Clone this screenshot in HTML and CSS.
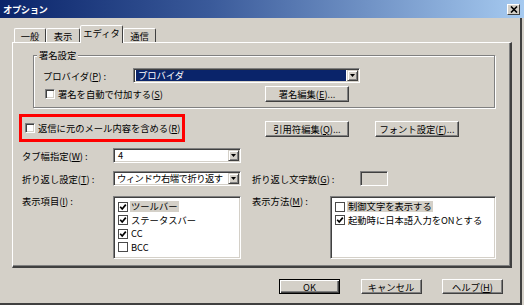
FILE: index.html
```html
<!DOCTYPE html>
<html lang="ja">
<head>
<meta charset="utf-8">
<title>オプション</title>
<link rel="stylesheet" href="styles.css">
</head>
<body>
<div class="window">
  <div class="titlebar">
    <span class="title">オプション</span>
    <span class="close"><svg width="8" height="7" viewBox="0 0 8 7"><path d="M1 0.5 L7 6.5 M7 0.5 L1 6.5" stroke="#000" stroke-width="1.6"/></svg></span>
  </div>
  <div class="frame">
    <div class="tabs">
      <div class="tab w1">一般</div>
      <div class="tab w2">表示</div>
      <div class="tab active w3">エディタ</div>
      <div class="tab w4">通信</div>
    </div>
    <div class="panel">
      <div class="group">
        <div class="legend">署名設定</div>
        <div class="row provider-row">
          <span class="label provider-label">プロバイダ(<u>P</u>) :</span>
          <div class="combo provider-combo">
            <span class="combo-text sel">プロバイダ</span>
            <span class="drop"><svg width="5" height="3" viewBox="0 0 5 3"><path d="M0 0 H5 L2.5 3 Z" fill="#000"/></svg></span>
          </div>
        </div>
        <div class="row auto-row">
          <label class="check auto-check"><span class="box"></span><span>署名を自動で付加する(<u>S</u>)</span></label>
          <button class="btn wide">署名編集(<u>E</u>)...</button>
        </div>
      </div>

      <div class="row reply-row">
        <div class="highlight">
          <label class="check"><span class="box"></span><span>返信に元のメール内容を含める(<u>R</u>)</span></label>
        </div>
        <button class="btn wide quote-btn">引用符編集(<u>Q</u>)...</button>
        <button class="btn wide font-btn">フォント設定(<u>F</u>)...</button>
      </div>

      <div class="row tab-row">
        <span class="label left-label">タブ幅指定(<u>W</u>) :</span>
        <div class="combo small-combo">
          <span class="combo-text">4</span>
          <span class="drop"><svg width="5" height="3" viewBox="0 0 5 3"><path d="M0 0 H5 L2.5 3 Z" fill="#000"/></svg></span>
        </div>
      </div>

      <div class="row wrap-row">
        <span class="label left-label">折り返し設定(<u>T</u>) :</span>
        <div class="combo small-combo">
          <span class="combo-text tight">ウィンドウ右端で折り返す</span>
          <span class="drop"><svg width="5" height="3" viewBox="0 0 5 3"><path d="M0 0 H5 L2.5 3 Z" fill="#000"/></svg></span>
        </div>
        <span class="label mid-label wrap-label">折り返し文字数(<u>G</u>) :</span>
        <div class="textbox"></div>
      </div>

      <div class="row list-row">
        <span class="label left-label list-label">表示項目(<u>I</u>) :</span>
        <div class="listbox list-left">
          <div class="item"><span class="box flat"><svg width="8" height="8" viewBox="0 0 8 8"><path d="M1.2 3.8 L3.2 6 L6.8 1.6" fill="none" stroke="#000" stroke-width="1.7"/></svg></span><span class="item-text selected">ツールバー</span></div>
          <div class="item"><span class="box flat"><svg width="8" height="8" viewBox="0 0 8 8"><path d="M1.2 3.8 L3.2 6 L6.8 1.6" fill="none" stroke="#000" stroke-width="1.7"/></svg></span><span class="item-text">ステータスバー</span></div>
          <div class="item"><span class="box flat"><svg width="8" height="8" viewBox="0 0 8 8"><path d="M1.2 3.8 L3.2 6 L6.8 1.6" fill="none" stroke="#000" stroke-width="1.7"/></svg></span><span class="item-text">CC</span></div>
          <div class="item"><span class="box flat"></span><span class="item-text">BCC</span></div>
        </div>
        <span class="label mid-label method-label list-label">表示方法(<u>M</u>) :</span>
        <div class="listbox list-right">
          <div class="item"><span class="box flat"></span><span class="item-text selected">制御文字を表示する</span></div>
          <div class="item"><span class="box flat"><svg width="8" height="8" viewBox="0 0 8 8"><path d="M1.2 3.8 L3.2 6 L6.8 1.6" fill="none" stroke="#000" stroke-width="1.7"/></svg></span><span class="item-text">起動時に日本語入力をONとする</span></div>
        </div>
      </div>
    </div>

    <div class="buttons">
      <button class="btn dlg default">OK</button>
      <button class="btn dlg">キャンセル</button>
      <button class="btn dlg">ヘルプ(<u>H</u>)</button>
    </div>
  </div>
</div>
</body>
</html>
```

FILE: styles.css
```css
* { box-sizing: border-box; }
html, body { margin: 0; padding: 0; }
body {
  width: 524px;
  height: 305px;
  overflow: hidden;
  background: #d4d0c8;
  font-family: "Noto Sans CJK JP", "Noto Sans", sans-serif;
  font-size: 9.3px;
  line-height: 12px;
  color: #000;
}
u { text-decoration: underline; text-underline-offset: 1px; }

.window {
  width: 524px;
  height: 305px;
  display: flex;
  flex-direction: column;
}

.titlebar {
  flex: none;
  height: 18px;
  display: flex;
  align-items: center;
  justify-content: space-between;
  padding: 0 4px 0 3px;
  background: linear-gradient(to right, #0a246a 0%, #3a5a9a 40%, #a6caf0 100%);
}
.title {
  color: #fff;
  font-weight: bold;
  font-size: 9.3px;
  line-height: 12px;
  letter-spacing: -0.4px;
}
.close {
  width: 13px;
  height: 11px;
  margin-top: 1px;
  background: #d4d0c8;
  border: 1px solid;
  border-color: #fff #404040 #404040 #fff;
  display: flex;
  align-items: center;
  justify-content: center;
}

.frame {
  flex: 1;
  width: 522px;
  border-right: 2px solid #404040;
  border-bottom: 2px solid #404040;
  padding: 7px 0 0 12px;
}

/* tabs */
.tabs {
  display: flex;
  align-items: flex-end;
  height: 17px;
  margin-left: 2px;
  position: relative;
  z-index: 1;
}
.tab {
  height: 14px;
  border: 1px solid;
  border-bottom: none;
  border-color: #fff #404040 transparent #fff;
  border-radius: 2px 2px 0 0;
  text-align: center;
  line-height: 12px;
  padding-top: 1px;
}
.tab.w1 { width: 32px; }
.tab.w2 { width: 34px; }
.tab.w3 { width: 43px; }
.tab.w4 { width: 33px; }
.tab.active {
  height: 18px;
  margin-bottom: -1px;
  background: #d4d0c8;
  padding-top: 1px;
}

/* panel */
.panel {
  width: 500px;
  height: 226px;
  border-style: solid;
  border-width: 1px 2px 2px 1px;
  border-color: #fff #404040 #404040 #fff;
  box-shadow: inset -1px -1px 0 #808080;
}

.row { display: flex; align-items: center; }
.label { white-space: nowrap; }

/* signature group */
.group {
  margin: 12px 0 0 20px;
  width: 462px;
  height: 53px;
  border: 1px solid #808080;
  box-shadow: 1px 1px 0 #fff, inset 1px 1px 0 #fff;
}
.legend {
  width: fit-content;
  margin: -7px 0 0 3px;
  padding: 0 2px;
  background: #d4d0c8;
  line-height: 12px;
}
.provider-row { margin-top: 7px; padding-left: 9px; }
.provider-label { width: 90px; }
.provider-combo { width: 227px; }
.auto-row { margin-top: 3px; }
.auto-check { width: 220px; margin-left: 11px; }

/* reply row */
.reply-row { margin-top: 6px; }
.highlight {
  margin-left: 6px;
  width: 166px;
  height: 28px;
  border: 3px solid #ff0000;
  padding-left: 3px;
  display: flex;
  align-items: center;
}
.quote-btn { margin-left: 80px; margin-top: 2px; }
.font-btn { margin-left: 26px; margin-top: 2px; }

.left-label { width: 100px; padding-left: 9px; }
.tab-row { margin-top: 6px; }
.wrap-row { margin-top: 8px; }
.small-combo { width: 128px; }
.mid-label { margin-left: 11px; }
.wrap-label { width: 108px; }
.method-label { width: 78px; }

.list-row { margin-top: 10px; align-items: flex-start; }
.list-label { margin-top: -1px; }

/* controls */
.check { display: flex; align-items: center; gap: 3px; white-space: nowrap; }
.box {
  flex: none;
  width: 10px;
  height: 10px;
  background: #fff;
  border: 1px solid;
  border-color: #808080 #fff #fff #808080;
  box-shadow: inset 1px 1px 0 #404040, inset -1px -1px 0 #d4d0c8;
  display: flex;
  align-items: center;
  justify-content: center;
}
.box.flat {
  border: 1px solid #4a4a4a;
  box-shadow: none;
}

.combo {
  display: flex;
  align-items: center;
  height: 15px;
  background: #fff;
  border: 1px solid;
  border-color: #808080 #fff #fff #808080;
  box-shadow: inset 1px 1px 0 #404040, inset -1px -1px 0 #d4d0c8;
  padding: 1px;
}
.combo-text {
  flex: 1;
  align-self: center;
  padding-left: 2px;
  margin-left: 1px;
  height: 11px;
  line-height: 11px;
  white-space: nowrap;
}
.combo-text.tight { letter-spacing: -0.5px; padding-left: 1px; }
.combo-text.sel { background: #0a246a; color: #fff; margin-right: 1px; }
.drop {
  flex: none;
  align-self: stretch;
  width: 11px;
  background: #d4d0c8;
  border: 1px solid;
  border-color: #d4d0c8 #404040 #404040 #d4d0c8;
  box-shadow: inset 1px 1px 0 #fff, inset -1px -1px 0 #808080;
  display: flex;
  align-items: center;
  justify-content: center;
}

.textbox {
  width: 28px;
  height: 15px;
  background: #d4d0c8;
  border: 1px solid;
  border-color: #808080 #fff #fff #808080;
  box-shadow: inset 1px 1px 0 #404040;
}

.listbox {
  height: 63px;
  background: #fff;
  border: 1px solid;
  border-color: #808080 #fff #fff #808080;
  box-shadow: inset 1px 1px 0 #404040, inset -1px -1px 0 #d4d0c8;
  padding: 3px 0 0 4px;
}
.list-left { width: 128px; }
.list-right { width: 166px; }
.item {
  display: flex;
  align-items: center;
  height: 13.5px;
  gap: 2px;
}
.item-text { padding: 0 1px; line-height: 11px; white-space: nowrap; }
.item-text.selected { background: #d4d0c8; }

.btn {
  font: inherit;
  color: #000;
  padding: 0;
  height: 16px;
  background: #d4d0c8;
  border: 1px solid;
  border-color: #fff #404040 #404040 #fff;
  box-shadow: inset -1px -1px 0 #808080;
  display: flex;
  align-items: center;
  justify-content: center;
  white-space: nowrap;
}
.btn.wide { width: 84px; }
.btn.dlg { width: 61px; height: 15px; }
.btn.default {
  border-color: #000;
  box-shadow: inset 1px 1px 0 #fff, inset -1px -1px 0 #404040, inset -2px -2px 0 #808080;
}

.buttons {
  display: flex;
  gap: 20.5px;
  margin: 11px 0 0 267px;
}
```
